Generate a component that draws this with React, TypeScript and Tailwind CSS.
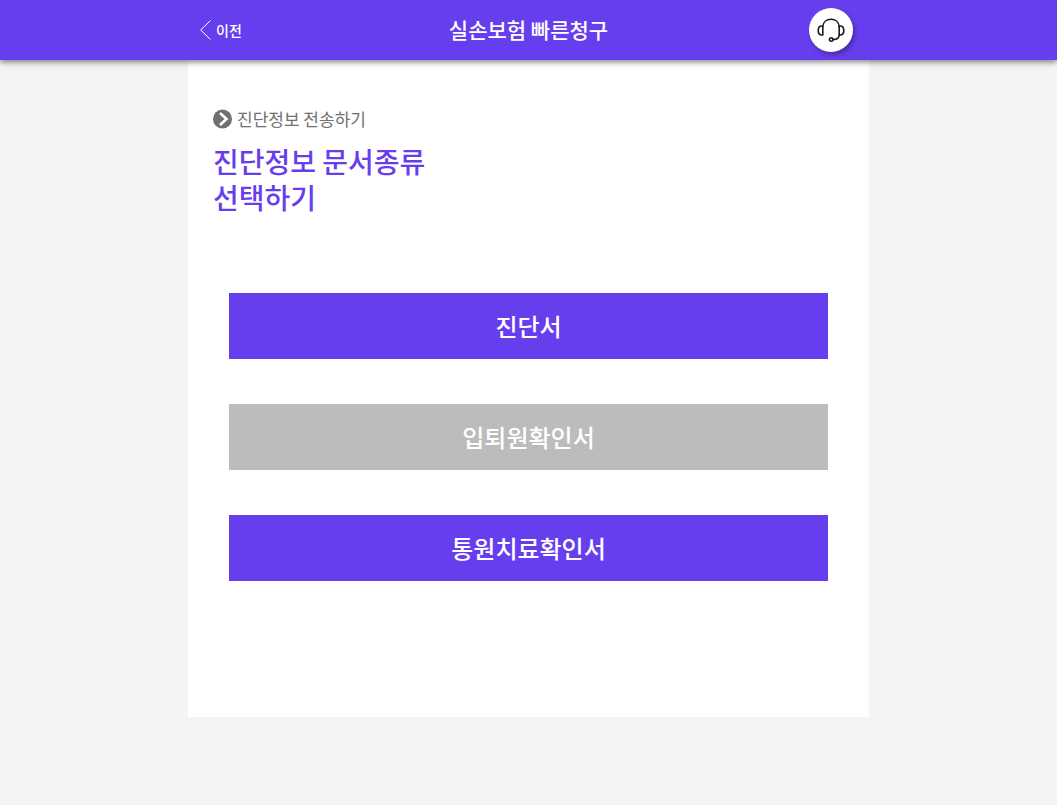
const documents = [
  { id: "diagnosis", label: "진단서", enabled: true },
  { id: "admission", label: "입퇴원확인서", enabled: false },
  { id: "outpatient", label: "통원치료확인서", enabled: true },
]

function Header() {
  return (
    <header className="relative z-10 bg-[#673eee] text-white shadow-[0_2px_6px_rgba(0,0,0,0.5)]">
      <div className="mx-auto grid h-15 max-w-[681px] grid-cols-3 items-center px-3">
        <button type="button" className="flex items-center gap-1 justify-self-start text-sm font-medium">
          <svg width="12" height="20" viewBox="0 0 12 20" fill="none" stroke="currentColor" aria-hidden="true">
            <path d="M10.500 0.500 0.700 10l9.800 9.500" />
          </svg>
          이전
        </button>
        <h1 className="justify-self-center text-[21px] font-medium whitespace-nowrap">실손보험 빠른청구</h1>
        <button
          type="button"
          aria-label="고객센터"
          className="mr-1 flex size-11 items-center justify-center justify-self-end rounded-full bg-white text-[#1a1a1a] shadow-[2px_3px_5px_rgba(0,0,0,0.3)]"
        >
          <svg
            width="28"
            height="24"
            viewBox="0 0 28 24"
            fill="none"
            stroke="currentColor"
            strokeWidth="1.6"
            strokeLinecap="round"
            strokeLinejoin="round"
            aria-hidden="true"
          >
            <path d="M5.800 8.500C6.200 4.300 9.400 1.300 14 1.300s7.800 3 8.200 7.200" />
            <path d="M5.800 8v9H4.800C2.500 17 1.200 15 1.200 12.500S2.500 8 4.800 8Z" />
            <path d="M22.200 8v9h1c2.300 0 3.600-2 3.600-4.500S25.500 8 23.200 8Z" />
            <path d="M22.200 17c0 2.700-2 4.600-6.200 4.600" />
            <circle cx="14.200" cy="21.500" r="1.700" />
          </svg>
        </button>
      </div>
    </header>
  )
}

export default function App() {
  return (
    <div className="min-h-screen bg-[#f4f4f4] font-['Noto_Sans_CJK_KR',sans-serif]">
      <Header />
      <main className="mx-auto max-w-[681px] bg-white px-[25px] pt-[47px] pb-34">
        <p className="flex items-center gap-1 text-[17px] leading-6 text-[#707070]">
          <svg width="20" height="20" viewBox="0 0 20 20" fill="none" aria-hidden="true">
            <circle cx="9.500" cy="10" r="9.500" fill="#707070" />
            <path d="m7 4 6.500 6L7 16" stroke="#fff" strokeWidth="2.600" />
          </svg>
          진단정보 전송하기
        </p>
        <h2 className="mt-3 text-[28px] leading-9 font-medium text-[#673eee]">
          진단정보 문서종류
          <br />
          선택하기
        </h2>
        <div className="mt-[78px] flex flex-col gap-[45px] px-4">
          {documents.map((doc) => (
            <button
              key={doc.id}
              type="button"
              disabled={!doc.enabled}
              className="h-[66px] bg-[#673eee] text-2xl font-medium text-white disabled:bg-[#bcbcbc]"
            >
              {doc.label}
            </button>
          ))}
        </div>
      </main>
    </div>
  )
}
